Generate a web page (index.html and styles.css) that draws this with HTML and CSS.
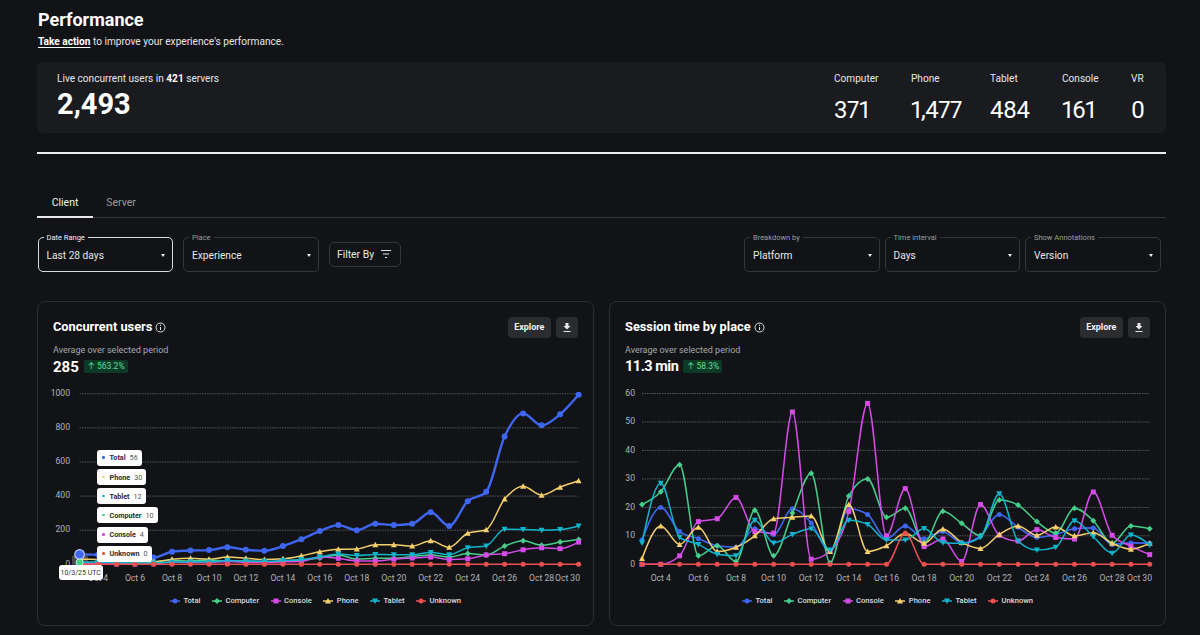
FILE: index.html
```html
<!DOCTYPE html>
<html lang="en">
<head>
<meta charset="utf-8">
<title>Performance</title>
<link rel="stylesheet" href="styles.css">
</head>
<body>
<main class="page">
  <h1 class="title">Performance</h1>
  <p class="subtitle"><a class="action" href="#">Take action</a> to improve your experience's performance.</p>

  <section class="live">
    <div class="live-total">
      <div class="stat-label">Live concurrent users in <b>421</b> servers</div>
      <div class="live-number">2,493</div>
    </div>
    <div class="live-stats">
      <div class="stat"><div class="stat-label">Computer</div><div class="stat-number">371</div></div>
      <div class="stat"><div class="stat-label">Phone</div><div class="stat-number">1,477</div></div>
      <div class="stat"><div class="stat-label">Tablet</div><div class="stat-number">484</div></div>
      <div class="stat"><div class="stat-label">Console</div><div class="stat-number">161</div></div>
      <div class="stat"><div class="stat-label">VR</div><div class="stat-number">0</div></div>
    </div>
  </section>

  <hr class="rule">

  <nav class="tabs">
    <a class="tab tab-active" href="#">Client</a>
    <a class="tab" href="#">Server</a>
  </nav>

  <section class="filters">
    <div class="filter-group">
      <div class="select select-focus"><span class="select-label">Date Range</span><span>Last 28 days</span><i class="caret"></i></div>
      <div class="select"><span class="select-label">Place</span><span>Experience</span><i class="caret"></i></div>
      <button class="filter-btn">Filter By
        <svg width="12" height="10" viewBox="0 0 12 10"><path d="M1 1.5h10M3 5h6M5 8.5h2" stroke="#e8e8e8" stroke-width="1.2" fill="none"/></svg>
      </button>
    </div>
    <div class="filter-group filter-group-right">
      <div class="select"><span class="select-label">Breakdown by</span><span>Platform</span><i class="caret"></i></div>
      <div class="select"><span class="select-label">Time interval</span><span>Days</span><i class="caret"></i></div>
      <div class="select"><span class="select-label">Show Annotations</span><span>Version</span><i class="caret"></i></div>
    </div>
  </section>

  <section class="cards">
    <article class="card">
      <header class="card-head">
        <h2 class="card-title">Concurrent users
          <svg class="info" width="11" height="11" viewBox="0 0 11 11"><circle cx="5.5" cy="5.5" r="4.5" stroke="#e4e4e4" fill="none"/><path d="M5.5 5v3" stroke="#e4e4e4"/><circle cx="5.5" cy="3.2" r=".7" fill="#e4e4e4"/></svg>
        </h2>
        <div class="card-actions">
          <button class="btn">Explore</button>
          <button class="btn btn-icon"><svg width="10" height="11" viewBox="0 0 10 11"><path d="M3.5 1h3v3h2L5 7.5 1.5 4h2zM1.5 9h7v1h-7z" fill="#e8e8e8"/></svg></button>
        </div>
      </header>
      <div class="avg-label">Average over selected period</div>
      <div class="avg-row"><span class="avg-value">285</span><span class="badge">↑ 563.2%</span></div>
      <div class="chart" id="chart-users">
        <div class="tip tip-1"><i class="dot dot-total"></i><b>Total</b><span>56</span></div>
        <div class="tip tip-2"><i class="dot dot-phone"></i><b>Phone</b><span>30</span></div>
        <div class="tip tip-3"><i class="dot dot-tablet"></i><b>Tablet</b><span>12</span></div>
        <div class="tip tip-4"><i class="dot dot-computer"></i><b>Computer</b><span>10</span></div>
        <div class="tip tip-5"><i class="dot dot-console"></i><b>Console</b><span>4</span></div>
        <div class="tip tip-6"><i class="dot dot-unknown"></i><b>Unknown</b><span>0</span></div>
        <div class="tip tip-date">10/3/25 UTC</div>
      </div>
      <div class="legend" id="legend-users"></div>
    </article>

    <article class="card">
      <header class="card-head">
        <h2 class="card-title">Session time by place
          <svg class="info" width="11" height="11" viewBox="0 0 11 11"><circle cx="5.5" cy="5.5" r="4.5" stroke="#e4e4e4" fill="none"/><path d="M5.5 5v3" stroke="#e4e4e4"/><circle cx="5.5" cy="3.2" r=".7" fill="#e4e4e4"/></svg>
        </h2>
        <div class="card-actions">
          <button class="btn">Explore</button>
          <button class="btn btn-icon"><svg width="10" height="11" viewBox="0 0 10 11"><path d="M3.5 1h3v3h2L5 7.5 1.5 4h2zM1.5 9h7v1h-7z" fill="#e8e8e8"/></svg></button>
        </div>
      </header>
      <div class="avg-label">Average over selected period</div>
      <div class="avg-row"><span class="avg-value avg-value-narrow">11.3 min</span><span class="badge">↑ 58.3%</span></div>
      <div class="chart" id="chart-session"></div>
      <div class="legend" id="legend-session"></div>
    </article>
  </section>
</main>
<script src="charts.js"></script>
</body>
</html>
```
FILE: styles.css
```css
* { box-sizing: border-box; }
html, body { margin: 0; height: 100%; }
body {
  background: #111317;
  color: #f2f2f3;
  font-family: Roboto, Inter, sans-serif;
  overflow: hidden;
}
.page { padding: 9px 34px 0 37px; }
.title { margin: 0 0 0 1px; font-size: 18px; line-height: 21px; font-weight: 700; color: #fff; }
.subtitle { margin: 5px 0 0 1px; font-size: 10.15px; line-height: 14px; color: #e6e6e7; }
.action { color: #fff; font-weight: 700; text-decoration: underline; text-underline-offset: 2px; }

.live {
  margin-top: 13px;
  height: 71px;
  background: #191b1f;
  border-radius: 6px;
  padding: 10px 21px 0 20px;
  display: flex;
  justify-content: space-between;
}
.stat-label { font-size: 10.1px; line-height: 14px; color: #e6e6e7; white-space: nowrap; }
.stat-label b { color: #fff; }
.live-number { font-size: 29px; line-height: 34px; font-weight: 700; color: #fff; margin-top: 1px; }
.live-stats { display: grid; grid-template-columns: 77px 79px 72px 69px 14px; }
.stat-number {
  font-size: 24px;
  line-height: 28px;
  margin-top: 10px;
  color: #fff;
  font-weight: 400;
  font-variant-numeric: proportional-nums;
  letter-spacing: -.5px;
}

.rule { margin: 19px 0 0; border: 0; height: 1.5px; background: #eceded; }

.tabs { margin-top: 33px; height: 31px; display: flex; border-bottom: 1px solid #34363a; }
.tab {
  width: 56px;
  text-align: center;
  font-size: 10.5px;
  line-height: 32px;
  color: #9b9c9f;
  text-decoration: none;
}
.tab-active { color: #f0f0f1; border-bottom: 2px solid #e8e8e8; height: 31px; }

.filters { margin-top: 19px; display: flex; justify-content: space-between; padding: 0 5.5px 0 .5px; }
.filter-group { display: flex; align-items: center; gap: 10px; }
.filter-group-right { gap: 5px; }
.select {
  position: relative;
  width: 135.5px;
  height: 35px;
  border: 1px solid #34363a;
  border-radius: 5px;
  padding: 2px 8px 0;
  display: flex;
  align-items: center;
  font-size: 10.2px;
  color: #e8e8e9;
}
.select-focus { border-color: #dcdcdd; border-width: 1.5px; }
.select-label {
  position: absolute;
  left: 5px;
  top: -5px;
  padding: 0 3px;
  background: #111317;
  font-size: 7.5px;
  line-height: 9px;
  color: #9b9c9f;
}
.select-focus .select-label { color: #f0f0f1; }
.caret {
  position: absolute;
  right: 7px;
  top: 16px;
  border-left: 2.5px solid transparent;
  border-right: 2.5px solid transparent;
  border-top: 3px solid #eee;
}
.filter-btn {
  width: 72px;
  height: 25px;
  border: 1px solid #34363a;
  border-radius: 5px;
  background: transparent;
  color: #e8e8e9;
  font: 400 10.4px Roboto, sans-serif;
  display: flex;
  align-items: center;
  justify-content: center;
  gap: 6px;
  padding: 0;
}

.cards { margin-top: 29px; display: flex; gap: 15px; }
.card {
  flex: 1 1 0;
  height: 325px;
  border: 1px solid #2c2e32;
  border-radius: 8px;
  background: #111317;
}
.card-head {
  display: flex;
  justify-content: space-between;
  align-items: center;
  padding: 15px 15px 0 15px;
  height: 36px;
}
.card-title {
  margin: 0;
  font-size: 12.8px;
  line-height: 20px;
  font-weight: 700;
  color: #fff;
  display: flex;
  align-items: center;
  gap: 3px;
}
.card-actions { display: flex; gap: 5px; }
.btn {
  height: 21px;
  width: 43.5px;
  border: 0;
  border-radius: 4px;
  background: #2a2c30;
  color: #f0f0f1;
  font: 700 9px Roboto, sans-serif;
  padding: 0;
  display: flex;
  align-items: center;
  justify-content: center;
}
.btn-icon { width: 22px; }
.avg-label { margin: 6.5px 0 0 15px; font-size: 9px; line-height: 12px; color: #a7a8aa; }
.avg-row { margin: 2.5px 0 0 15px; display: flex; align-items: center; gap: 5px; height: 16px; }
.avg-value { font-size: 15px; font-weight: 700; color: #fff; }
.avg-value-narrow { font-size: 14.5px; letter-spacing: -.5px; }
.badge {
  font-size: 8.5px;
  line-height: 13px;
  padding: 0 3px 0 4px;
  border-radius: 2px;
  background: #0d3a27;
  color: #62dc9f;
}

.chart { position: relative; margin-top: 10px; height: 206px; }
.chart svg { display: block; }
.grid { stroke: #55575a; stroke-width: 1; stroke-dasharray: 1.5 1; }
.axis-text { font-size: 8.6px; fill: #b3b4b6; font-family: Roboto, sans-serif; }

.tip {
  position: absolute;
  left: 59px;
  height: 16px;
  background: #fff;
  border-radius: 3px;
  color: #2a2c30;
  font-size: 7.2px;
  display: flex;
  align-items: center;
  padding: 0 4px;
  gap: 4px;
  white-space: nowrap;
}
.tip b { font-weight: 700; }
.tip span { color: #55575a; }
.tip-1 { top: 65px; }
.tip-2 { top: 84.5px; }
.tip-3 { top: 103.5px; }
.tip-4 { top: 122.5px; }
.tip-5 { top: 142px; }
.tip-6 { top: 161px; }
.tip-date { left: 20.5px; top: 180.5px; height: 15px; font-size: 7px; color: #333; z-index: 1; padding: 0 2px; }
.dot { width: 2.5px; height: 2.5px; border-radius: 50%; margin: 0 1px; }
.dot-total { background: #3f66f0; }
.dot-phone { background: #f5cf6b; }
.dot-tablet { background: #10b5cc; }
.dot-computer { background: #45cf8a; }
.dot-console { background: #d44be8; }
.dot-unknown { background: #e9504f; }

.legend { display: flex; justify-content: center; gap: 11.5px; margin-top: 4px; height: 12px; align-items: center; }
.legend-item { display: flex; align-items: center; gap: 3.5px; font-size: 7.6px; font-weight: 500; color: #dcdcdd; }
```
FILE: charts.js
```js
var SERIES = [
  { key: 'Total', color: '#3f66f0', shape: 'circle' },
  { key: 'Computer', color: '#45cf8a', shape: 'diamond' },
  { key: 'Console', color: '#d44be8', shape: 'square' },
  { key: 'Phone', color: '#f5cf6b', shape: 'up' },
  { key: 'Tablet', color: '#10b5cc', shape: 'down' },
  { key: 'Unknown', color: '#e9504f', shape: 'circle' }
];
var ZERO = [];
for (var z = 0; z < 28; z++) ZERO.push(0);

var USERS = {
  svgX: 38, x0: 79.6, step: 18.48, y0: 564.3, yPerUnit: 0.1705, ticks: [0, 200, 400, 600, 800, 1000],
  gridEnd: 578, tickX: 70, thick: 2.4,
  data: [
    [60,56,55,50,40,74,81,83,100,85,80,107,147,195,230,200,238,230,238,305,225,370,425,750,885,815,880,995],
    [10,12,8,6,15,22,20,25,18,18,15,18,25,37,55,30,35,35,45,55,42,63,55,107,138,112,130,145],
    [4,3,2,2,3,14,10,10,16,12,10,14,18,42,35,20,20,30,37,42,28,32,55,62,85,97,92,130],
    [30,28,25,20,15,30,35,30,42,35,28,32,50,74,88,90,115,115,107,138,100,182,203,383,458,405,452,490],
    [12,12,10,8,8,12,15,14,22,20,18,22,28,42,60,52,58,56,56,70,56,97,108,205,204,200,204,225],
    ZERO
  ]
};
var SESSION = {
  svgX: 610, x0: 642, step: 18.804, y0: 564.3, yPerUnit: 2.847, ticks: [0, 10, 20, 30, 40, 50, 60],
  gridEnd: 1150, tickX: 635, thick: 1.6,
  data: [
    [8.5,20,11.5,9,6.5,6,12.5,10.5,19.5,14.5,4.5,19.5,17.5,9,13.5,9,11.5,7.5,10,17.5,13,9.5,10.5,12.5,12.8,7,7.5,7.4],
    [21,25.5,35,3,6.5,1,19,3,18,32,0.5,24,30,16.5,19.7,7.5,18.6,14.4,10,22.6,20.8,15,11,19.7,15.3,7.4,13.5,12.5],
    [0,0,3,15,16,23.5,11.5,11,53.5,1.8,4.5,18.5,56.5,10,26.6,6.2,8.9,1,21,10.2,8.2,12.2,9.4,8.9,25.4,10.2,6.4,3.4],
    [2,13.5,7,13,4.5,6,10,16,16.5,17,4.5,21,4.5,6.5,10.9,7.4,12.4,7.7,5.6,10.5,13.5,10.2,13.1,10,11.1,7.4,5.3,7.4],
    [7.5,28.5,9.5,7,3.5,3,15.5,7.5,10.5,12.5,5,15.5,14,8.5,8.5,12.6,7.6,7.4,9.5,24.8,8.2,5,6,15.3,9.7,3.9,10.3,6.8],
    [0,0,0,0,0,0,0,0,0,0,0,0,0,0,10.9,0,0,0,0,0,0,0,0,0,0,0,0,0]
  ]
};

function sign(v) { return v < 0 ? -1 : 1; }

function monotonePath(pts) {
  var n = pts.length, m = [], i;
  for (i = 1; i < n - 1; i++) {
    var h0 = pts[i][0] - pts[i - 1][0], h1 = pts[i + 1][0] - pts[i][0];
    var s0 = (pts[i][1] - pts[i - 1][1]) / h0, s1 = (pts[i + 1][1] - pts[i][1]) / h1;
    var p = (s0 * h1 + s1 * h0) / (h0 + h1);
    m[i] = (sign(s0) + sign(s1)) * Math.min(Math.abs(s0), Math.abs(s1), 0.5 * Math.abs(p)) || 0;
  }
  var hs = pts[1][0] - pts[0][0];
  m[0] = (3 * (pts[1][1] - pts[0][1]) / hs - m[1]) / 2;
  m[n - 1] = (3 * (pts[n - 1][1] - pts[n - 2][1]) / hs - m[n - 2]) / 2;
  var d = 'M' + pts[0][0].toFixed(1) + ' ' + pts[0][1].toFixed(1);
  for (i = 0; i < n - 1; i++) {
    var dx = (pts[i + 1][0] - pts[i][0]) / 3;
    d += 'C' + (pts[i][0] + dx).toFixed(1) + ' ' + (pts[i][1] + dx * m[i]).toFixed(1) + ' ' +
      (pts[i + 1][0] - dx).toFixed(1) + ' ' + (pts[i + 1][1] - dx * m[i + 1]).toFixed(1) + ' ' +
      pts[i + 1][0].toFixed(1) + ' ' + pts[i + 1][1].toFixed(1);
  }
  return d;
}

function marker(shape, x, y, r, color) {
  if (shape === 'circle') return '<circle cx="' + x.toFixed(1) + '" cy="' + y.toFixed(1) + '" r="' + r + '" fill="' + color + '"/>';
  var pts;
  if (shape === 'square') pts = [[-r, -r], [r, -r], [r, r], [-r, r]];
  if (shape === 'diamond') pts = [[0, -r * 1.2], [r * 1.2, 0], [0, r * 1.2], [-r * 1.2, 0]];
  if (shape === 'up') pts = [[0, -r * 1.2], [r * 1.2, r], [-r * 1.2, r]];
  if (shape === 'down') pts = [[-r * 1.2, -r], [r * 1.2, -r], [0, r * 1.2]];
  return '<polygon fill="' + color + '" points="' + pts.map(function (q) {
    return (x + q[0]).toFixed(1) + ',' + (y + q[1]).toFixed(1);
  }).join(' ') + '"/>';
}

function xLabels(cfg) {
  var out = '', i;
  for (i = 4; i <= 30; i += 2) {
    var last = i === 30;
    var x = last ? cfg.gridEnd + 2 : cfg.x0 + (i - 3) * cfg.step;
    out += '<text class="axis-text" text-anchor="' + (last ? 'end' : 'middle') + '" x="' + x.toFixed(1) + '" y="581">Oct ' + i + '</text>';
  }
  return out;
}

function drawChart(id, cfg, hover) {
  var out = '<svg width="555" height="206" viewBox="' + cfg.svgX + ' 385 555 206">';
  cfg.ticks.forEach(function (t) {
    var y = cfg.y0 - t * cfg.yPerUnit;
    if (t !== 0) out += '<line class="grid" x1="' + cfg.x0 + '" x2="' + cfg.gridEnd + '" y1="' + y.toFixed(1) + '" y2="' + y.toFixed(1) + '"/>';
    out += '<text class="axis-text" text-anchor="end" x="' + cfg.tickX + '" y="' + (y + 2.2).toFixed(1) + '">' + t + '</text>';
  });
  out += xLabels(cfg);
  if (hover) {
    out += '<rect x="72" y="555" width="16" height="11" rx="3" fill="#8b8d90" opacity=".45"/>';
  }
  SERIES.forEach(function (s, si) {
    var pts = cfg.data[si].map(function (v, i) {
      return [cfg.x0 + i * cfg.step, cfg.y0 - v * cfg.yPerUnit];
    });
    var w = si === 0 ? cfg.thick : 1.5;
    out += '<path d="' + monotonePath(pts) + '" fill="none" stroke="' + s.color + '" stroke-width="' + w + '"/>';
    var r = si === 0 && hover ? 3 : 2.5;
    pts.forEach(function (q) { out += marker(s.shape, q[0], q[1], r, s.color); });
  });
  if (hover) {
    out += '<circle cx="79.6" cy="554.4" r="4.8" fill="#3f66f0" stroke="#b9c6f7" stroke-width="1.2"/>';
    out += '<circle cx="79.6" cy="562.5" r="3.6" fill="#45cf8a" stroke="#bfeed6" stroke-width="1"/>';
  }
  out += '</svg>';
  document.getElementById(id).insertAdjacentHTML('afterbegin', out);
}

function drawLegend(id) {
  var out = '';
  SERIES.forEach(function (s) {
    out += '<span class="legend-item"><svg width="10" height="8" viewBox="0 0 10 8">' +
      '<line x1="0" x2="10" y1="4" y2="4" stroke="' + s.color + '" stroke-width="1.5"/>' +
      marker(s.shape, 5, 4, 2.5, s.color) + '</svg>' + s.key + '</span>';
  });
  document.getElementById(id).innerHTML = out;
}

drawChart('chart-users', USERS, true);
drawChart('chart-session', SESSION, false);
drawLegend('legend-users');
drawLegend('legend-session');
```
